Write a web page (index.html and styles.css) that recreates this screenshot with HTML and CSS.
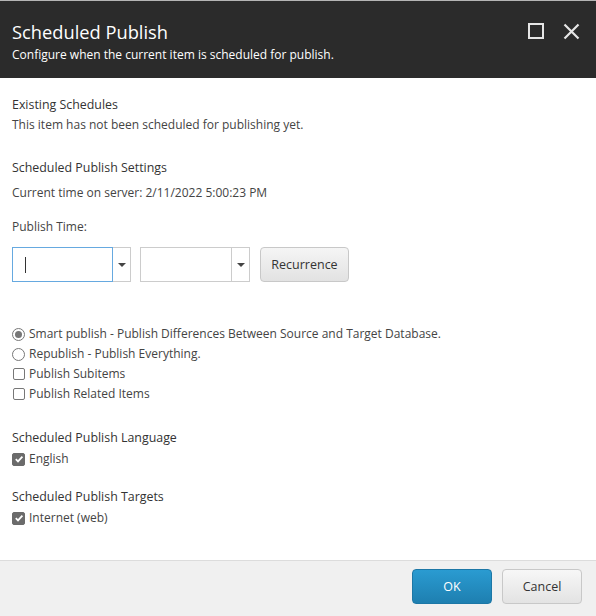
FILE: index.html
```html
<!DOCTYPE html>
<html>
<head>
<meta charset="utf-8">
<link rel="stylesheet" href="styles.css">
</head>
<body>
<div class="dialog">
  <header class="head">
    <div class="head-text">
      <div class="title">Scheduled Publish</div>
      <div class="subtitle">Configure when the current item is scheduled for publish.</div>
    </div>
    <div class="head-icons">
      <svg class="ico" width="16" height="16" viewBox="0 0 16 16"><rect x="1" y="1" width="14" height="14" fill="none" stroke="#e6e6e6" stroke-width="2"/></svg>
      <svg class="ico" width="17" height="17" viewBox="0 0 17 17"><path d="M1.5 1.5L15.5 15.5M15.5 1.5L1.5 15.5" stroke="#e6e6e6" stroke-width="2.2"/></svg>
    </div>
  </header>
  <main class="content">
    <div class="heading h1">Existing Schedules</div>
    <div class="text">This item has not been scheduled for publishing yet.</div>
    <div class="heading h2">Scheduled Publish Settings</div>
    <div class="text t2">Current time on server: 2/11/2022 5:00:23 PM</div>
    <div class="text t3">Publish Time:</div>
    <div class="time-row">
      <div class="combo">
        <div class="field focus w1"><span class="caret"></span></div>
        <div class="drop"><span class="tri"></span></div>
      </div>
      <div class="combo">
        <div class="field w2"></div>
        <div class="drop"><span class="tri"></span></div>
      </div>
      <div class="btn recur">Recurrence</div>
    </div>
    <div class="options">
      <div class="opt"><span class="radio on"></span>Smart publish - Publish Differences Between Source and Target Database.</div>
      <div class="opt"><span class="radio"></span>Republish - Publish Everything.</div>
      <div class="opt"><span class="check"></span>Publish Subitems</div>
      <div class="opt"><span class="check"></span>Publish Related Items</div>
    </div>
    <div class="heading h3">Scheduled Publish Language</div>
    <div class="opt single"><span class="check on"><svg width="10" height="10" viewBox="0 0 10 10"><path d="M1.8 5.2L4 7.4L8.4 2.6" fill="none" stroke="#fff" stroke-width="1.8"/></svg></span>English</div>
    <div class="heading h4">Scheduled Publish Targets</div>
    <div class="opt single"><span class="check on"><svg width="10" height="10" viewBox="0 0 10 10"><path d="M1.8 5.2L4 7.4L8.4 2.6" fill="none" stroke="#fff" stroke-width="1.8"/></svg></span>Internet (web)</div>
  </main>
  <footer class="foot">
    <div class="btn ok">OK</div>
    <div class="btn cancel">Cancel</div>
  </footer>
</div>
</body>
</html>
```
FILE: styles.css
```css
html, body {
  margin: 0;
  padding: 0;
  background: #fff;
}
body {
  font-family: "Open Sans", "Noto Sans", sans-serif;
  color: #444;
  font-size: 12px;
}
.dialog {
  width: 596px;
  height: 616px;
  display: flex;
  flex-direction: column;
}
.head {
  border-top: 1px solid #b5b5b5;
  background: #2b2b2b;
  display: flex;
  justify-content: space-between;
  color: #fff;
  box-sizing: border-box;
  height: 78px;
  padding: 0 16px 0 12px;
}
.title {
  font-size: 18.3px;
  line-height: 27px;
  margin-top: 17px;
}
.subtitle {
  font-size: 12px;
  line-height: 17px;
  margin-top: 1px;
}
.head-icons {
  display: flex;
  align-items: flex-start;
  gap: 19px;
  padding-top: 22px;
}
.content {
  flex: 1;
  padding: 0 12px;
}
.heading {
  color: #333;
  font-size: 12.4px;
  line-height: 20px;
}
.text {
  line-height: 20px;
}
.h1 { margin-top: 17px; }
.h2 { margin-top: 23px; }
.t2 { margin-top: 5px; }
.t3 { margin-top: 14px; }
.time-row {
  display: flex;
  margin-top: 10px;
  gap: 9px;
  align-items: flex-start;
}
.combo {
  display: flex;
}
.field {
  height: 35px;
  box-sizing: border-box;
  border: 1px solid #ccc;
  display: flex;
  align-items: center;
  padding-left: 12px;
}
.field.focus { border-color: #66a9e0; }
.w1 { width: 101px; }
.w2 { width: 92px; }
.caret {
  width: 1px;
  height: 16px;
  background: #333;
}
.drop {
  width: 18px;
  height: 35px;
  box-sizing: border-box;
  border: 1px solid #ccc;
  border-left: none;
  display: flex;
  align-items: center;
  justify-content: center;
}
.tri {
  width: 0;
  height: 0;
  border-left: 4px solid transparent;
  border-right: 4px solid transparent;
  border-top: 4px solid #444;
}
.btn {
  box-sizing: border-box;
  height: 35px;
  border-radius: 4px;
  display: flex;
  align-items: center;
  justify-content: center;
  font-size: 12.5px;
}
.recur {
  margin-left: 1px;
  width: 89px;
  border: 1px solid #c8c8c8;
  background: linear-gradient(#f5f5f5, #e2e2e2);
  color: #333;
}
.options {
  margin-top: 42px;
}
.opt {
  display: flex;
  align-items: center;
  line-height: 20px;
  height: 20px;
  gap: 4px;
}
.opt.single {
  margin-top: 1px;
}
.radio {
  width: 13px;
  height: 13px;
  box-sizing: border-box;
  border: 1px solid #777;
  border-radius: 50%;
  display: flex;
  align-items: center;
  justify-content: center;
}
.radio.on::after {
  content: "";
  width: 7px;
  height: 7px;
  border-radius: 50%;
  background: #777;
}
.check {
  width: 12px;
  height: 12px;
  box-sizing: border-box;
  border: 1px solid #777;
  border-radius: 2px;
  margin-left: 1px;
  display: flex;
  align-items: center;
  justify-content: center;
}
.check.on {
  background: #6b6b6b;
  border-color: #6b6b6b;
  width: 13px;
  height: 13px;
  margin-left: 0;
}
.h3 { margin-top: 24px; }
.h4 { margin-top: 18px; }
.foot {
  height: 56px;
  box-sizing: border-box;
  border-top: 1px solid #dcdcdc;
  background: #f0f0f0;
  display: flex;
  justify-content: flex-end;
  align-items: flex-start;
  padding: 8px 14px 0 0;
  gap: 10px;
}
.ok {
  width: 80px;
  background: linear-gradient(#2a9bd1, #1e7fb0);
  border: 1px solid #1c77a6;
  color: #fff;
}
.cancel {
  width: 80px;
  border: 1px solid #c8c8c8;
  background: linear-gradient(#f7f7f7, #e3e3e3);
  color: #333;
}
```
